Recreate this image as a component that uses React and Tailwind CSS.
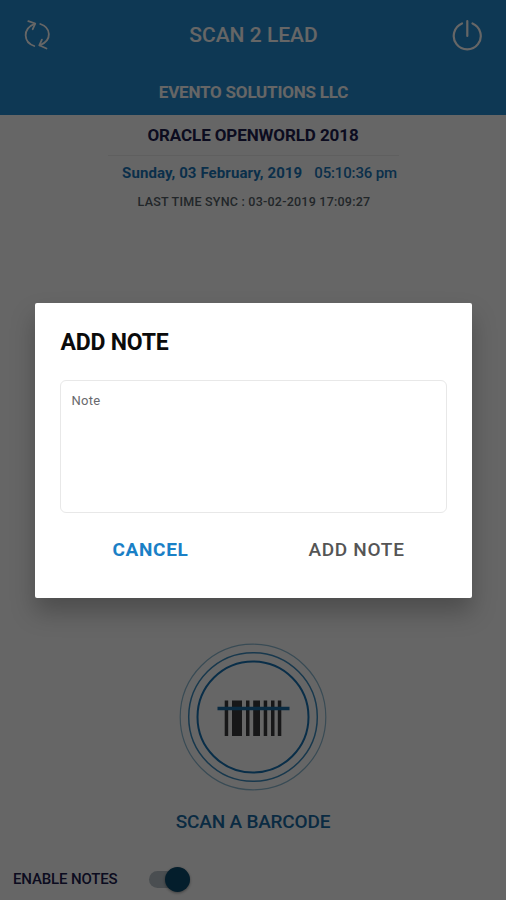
const SyncIcon = () => (
  <svg width="28" height="32" viewBox="0 0 28 32" fill="none" stroke="white" strokeWidth="1.8" strokeLinecap="round" strokeLinejoin="round">
    <path d="M11.300 27C0.500 23.500 -1 10 11.500 4.800" />
    <path d="M5.300 2.200l7 2.300-2.600 5.700" />
    <path d="M17.300 5c10.500 3.500 12.500 16-0.500 21.300" />
    <path d="M23.500 29.500l-7.200-3.200 2.600-5.700" />
  </svg>
)

const PowerIcon = () => (
  <svg width="32" height="32" viewBox="0 0 32 32" fill="none" stroke="white" strokeWidth="2.2" strokeLinecap="round">
    <path d="M11 4.500a13.500 13.500 0 1 0 10.500 0" />
    <path d="M16.300 2v15" />
  </svg>
)

const bars = [
  { x: 45.700, w: 3.500 },
  { x: 53, w: 10 },
  { x: 67, w: 3.500 },
  { x: 74.200, w: 6.800 },
  { x: 84.700, w: 3.500 },
  { x: 92, w: 3.500 },
  { x: 98.800, w: 3.500 },
]

const ScanButton = () => (
  <svg width="148" height="148" viewBox="0 0 148 148" fill="none">
    <circle cx="74" cy="74" r="72.800" stroke="#8fbbd3" strokeWidth="1.200" />
    <circle cx="74" cy="74" r="64.300" stroke="#3d8dc0" strokeWidth="1.500" />
    <circle cx="74" cy="74" r="55.500" stroke="#1873b5" strokeWidth="2" />
    {bars.map(b => (
      <rect key={b.x} x={b.x} y="57.500" width={b.w} height="35.500" fill="#3a3a3c" />
    ))}
    <path d="M38.500 65.500h72" stroke="#1b6ba5" strokeWidth="3.500" />
  </svg>
)

const Header = () => (
  <header className="flex h-[115px] flex-col bg-[#258cd1] text-white">
    <div className="flex h-[70px] items-center justify-between px-[23px]">
      <SyncIcon />
      <h1 className="pt-0.5 pl-[5px] text-[21px] font-medium whitespace-nowrap">SCAN 2 LEAD</h1>
      <PowerIcon />
    </div>
    <p className="pt-[10px] pl-px text-center text-[17px] leading-6 font-bold tracking-[-0.2px]">EVENTO SOLUTIONS LLC</p>
  </header>
)

const EventInfo = () => (
  <section className="flex flex-col items-center pt-2">
    <h2 className="text-[17px] leading-6 font-bold tracking-[-0.1px] text-[#20204f]">ORACLE OPENWORLD 2018</h2>
    <div className="mt-2 h-px w-[291px] bg-[#ededed]" />
    <div className="flex gap-3 pt-[7px] pl-[13px] text-[15px] leading-[20px] whitespace-nowrap text-[#1b76b9]">
      <span className="font-bold tracking-[0.1px]">Sunday, 03 February, 2019</span>
      <span className="font-medium tracking-[-0.15px]">05:10:36 pm</span>
    </div>
    <p className="pt-[10px] pl-0.5 text-[12.5px] leading-[17px] font-medium tracking-[0.23px] text-[#555f68]">
      LAST TIME SYNC : 03-02-2019 17:09:27
    </p>
  </section>
)

const NoteDialog = () => (
  <div className="absolute inset-0 flex flex-col items-center bg-black/60 pt-[303px]">
    <div className="flex h-[295px] w-[437px] flex-col rounded-[2px] bg-white px-[25px] shadow-[0_14px_24px_0px_rgba(0,0,0,0.25)]">
      <h3 className="pt-[25px] pl-px text-[23px] leading-[30px] font-bold tracking-[-0.2px] text-[#0b0b0b]">ADD NOTE</h3>
      <textarea
        className="mt-[22px] h-[133px] w-full resize-none rounded-[6px] border border-[#e8e8e8] bg-white px-[11px] py-[10px] text-[13px] leading-5 tracking-[0.3px] placeholder:text-[#68696d]"
        placeholder="Note"
      />
      <div className="flex pt-[23px] text-[19px] leading-[27px]">
        <button className="w-[182px] font-bold tracking-[0.7px] text-[#1a80c6]">CANCEL</button>
        <button className="ml-[25px] flex-1 font-medium tracking-[0.7px] text-[#555]">ADD NOTE</button>
      </div>
    </div>
  </div>
)

export default function App() {
  return (
    <div className="relative flex h-[900px] w-[506px] flex-col overflow-hidden bg-white font-['Roboto',sans-serif]">
      <Header />
      <EventInfo />
      <div className="mt-auto flex flex-col items-center">
        <ScanButton />
        <p className="-mb-px pt-[18px] text-[19px] leading-[26px] font-medium tracking-[-0.2px] text-[#1b6ba5]">SCAN A BARCODE</p>
      </div>
      <div className="flex h-[66px] items-end gap-[31px] pb-[7px] pl-[13px]">
        <span className="text-[15px] leading-7 font-medium tracking-[-0.15px] text-[#20204f]">ENABLE NOTES</span>
        <div className="flex h-7 items-center">
          <div className="flex h-[17px] w-[41px] items-center justify-end rounded-full bg-[#b8c3ca]">
            <div className="h-[25px] w-[25px] shrink-0 rounded-full bg-[#0b4b6e] shadow-[0_1px_3px_rgba(0,0,0,0.4)]" />
          </div>
        </div>
      </div>
      <NoteDialog />
    </div>
  )
}
